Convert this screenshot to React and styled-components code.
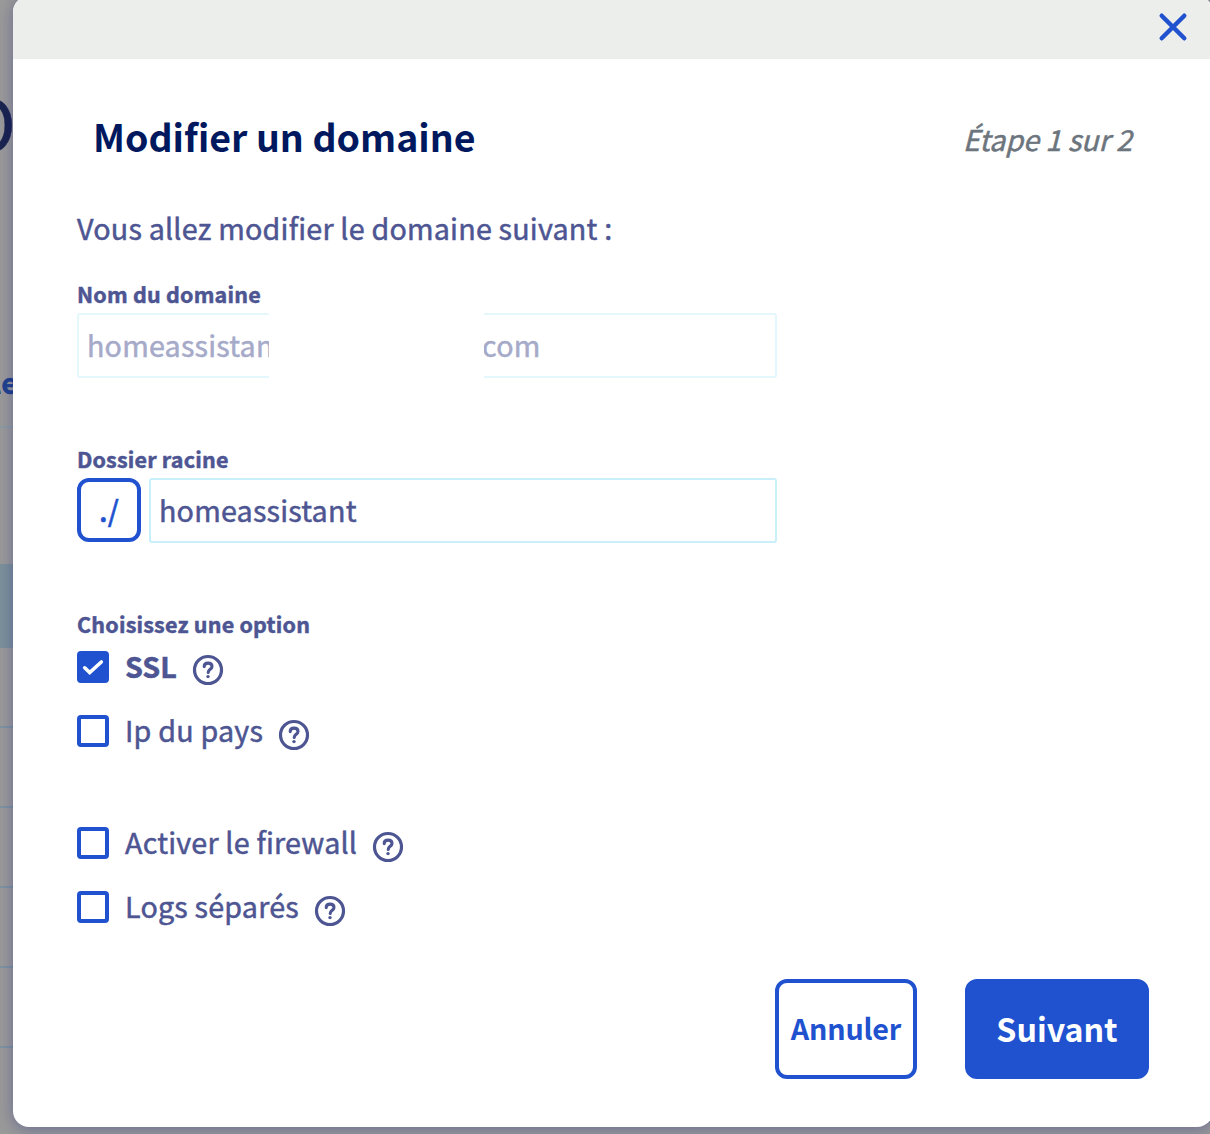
import React, { useState } from "react";
import styled, { createGlobalStyle } from "styled-components";

const GlobalStyle = createGlobalStyle`
  * {
    box-sizing: border-box;
  }
  body {
    margin: 0;
    overflow: hidden;
    background-color: #999999;
    font-family: "Noto Sans CJK SC", "Noto Sans", sans-serif;
    color: #4d5592;
    letter-spacing: 0.2px;
    -webkit-text-stroke: 0.5px currentColor;
  }
`;
const Page = styled.div`
  display: flex;
  align-items: flex-start;
  height: 1134px;
  overflow: hidden;
`;
const Behind = styled.div`
  display: flex;
  flex-direction: column;
  flex: none;
  width: 13px;
  height: 1134px;
  overflow: hidden;
`;
const BehindTitle = styled.div`
  display: flex;
  justify-content: flex-end;
  height: 300px;
  padding: 71px 0 0;
  margin-right: -3px;
  font-size: 72px;
  line-height: 100px;
  color: #1b254f;
`;
const BehindLink = styled.div`
  display: flex;
  justify-content: flex-end;
  height: 128px;
  padding-top: 62px;
  margin-right: -5px;
  border-bottom: 2px solid #8a9ba2;
  font-size: 28.7px;
  font-weight: 700;
  line-height: 40px;
  color: #22428c;
`;
const BehindRow = styled.div`
  flex: none;
  height: ${(props) => props.$height}px;
  background-color: ${(props) => (props.$active ? "#7b9099" : "transparent")};
  border-bottom: ${(props) => (props.$line ? "2px solid #7e93a0" : "none")};
`;
const Modal = styled.div`
  position: relative;
  display: flex;
  flex-direction: column;
  flex: none;
  width: 1200px;
  height: 1131px;
  margin-top: -4px;
  border-radius: 16px;
  background-color: white;
  box-shadow: 0 4px 16px rgba(0, 14, 156, 0.2), 0 0 12px rgba(0, 14, 80, 0.12);
`;
const TopBar = styled.div`
  display: flex;
  justify-content: flex-end;
  height: 63px;
  padding: 15px 24px 0 0;
  border-radius: 16px 16px 0 0;
  background-color: #eceeeb;
`;
const CloseButton = styled.button`
  display: flex;
  width: 32px;
  height: 32px;
  padding: 0;
  border: none;
  background: none;
`;
const Header = styled.div`
  display: flex;
  justify-content: space-between;
  align-items: flex-start;
  height: 60px;
  margin: 47px 81px 0 80px;
`;
const Title = styled.h1`
  margin: 0;
  font-size: 37.5px;
  font-weight: 700;
  line-height: 60px;
  letter-spacing: 0;
  -webkit-text-stroke: 0;
  color: #00185e;
`;
const Step = styled.span`
  padding-top: 3px;
  font-size: 28.7px;
  font-style: italic;
  line-height: 60px;
  letter-spacing: 0;
  color: #6c757d;
`;
const Body = styled.div`
  display: flex;
  flex-direction: column;
  padding: 0 64px;
`;
const Intro = styled.p`
  height: 49px;
  margin: 38px 0 0;
  font-size: 28.7px;
  line-height: 48px;
`;
const Field = styled.div`
  width: 700px;
  height: 101px;
  margin-top: ${(props) => props.$top}px;
`;
const Label = styled.div`
  height: 36px;
  font-size: 21.5px;
  font-weight: 700;
  line-height: 34px;
`;
const InputRow = styled.div`
  display: flex;
  gap: 8px;
`;
const Input = styled.input`
  flex: 1;
  min-width: 0;
  height: 65px;
  padding: 0 8px 2px;
  border: 2px solid #c8f0fa;
  border-radius: 3px;
  background-color: white;
  font-family: inherit;
  font-size: 28.7px;
  letter-spacing: inherit;
  color: #4d5592;
  outline: none;
`;
const MaskedInput = styled.div`
  display: flex;
  justify-content: space-between;
  width: 700px;
`;
const MaskedPart = styled.div`
  width: ${(props) => props.$width}px;
  height: 65px;
  padding-left: ${(props) => (props.$end ? 0 : 8)}px;
  text-indent: ${(props) => (props.$end ? -2 : 0)}px;
  border: 2px solid #e3f7fd;
  border-left-width: ${(props) => (props.$end ? 0 : 2)}px;
  border-right-width: ${(props) => (props.$end ? 2 : 0)}px;
  border-radius: ${(props) => (props.$end ? "0 3px 3px 0" : "3px 0 0 3px")};
  overflow: hidden;
  white-space: nowrap;
  font-size: 28.7px;
  line-height: 59px;
  color: #a6aac9;
`;
const Prefix = styled.div`
  width: 64px;
  height: 64px;
  border: 4px solid #2052d0;
  border-radius: 12px;
  text-align: center;
  font-size: 28.7px;
  font-weight: 500;
  line-height: 55px;
  color: #2052d0;
`;
const Options = styled.div`
  display: flex;
  flex-direction: column;
  margin-top: 64px;
`;
const Option = styled.div`
  display: flex;
  align-items: center;
  height: 32px;
  margin-top: ${(props) => props.$top}px;
  font-size: 28.7px;
  font-weight: ${(props) => (props.$checked ? 700 : 400)};
  line-height: 30px;
  cursor: pointer;
`;
const OptionText = styled.span`
  height: 32px;
  letter-spacing: ${(props) => (props.$checked ? 0 : 0.2)}px;
`;
const Box = styled.span`
  display: flex;
  align-items: center;
  justify-content: center;
  width: 32px;
  height: 32px;
  margin-right: 16px;
  border: 4px solid #2052d0;
  border-radius: 4px;
  background-color: ${(props) => (props.$checked ? "#2052d0" : "white")};
`;
const HelpIcon = styled.svg`
  width: 32px;
  height: 32px;
  margin: ${(props) => (props.$checked ? 6 : 7)}px 0 0 15px;
  fill: none;
  stroke: #4d5592;
`;
const Footer = styled.div`
  display: flex;
  justify-content: flex-end;
  gap: 48px;
  margin-top: 56px;
`;
const Button = styled.button`
  width: ${(props) => (props.$primary ? 184 : 142)}px;
  height: 100px;
  padding: 0 0 ${(props) => (props.$primary ? 2 : 4)}px;
  border: 4px solid #2052d0;
  border-radius: 12px;
  background-color: ${(props) => (props.$primary ? "#2052d0" : "white")};
  font-family: inherit;
  font-size: ${(props) => (props.$primary ? 32.2 : 28.7)}px;
  font-weight: 700;
  letter-spacing: ${(props) => (props.$primary ? 0 : -0.2)}px;
  -webkit-text-stroke: 0;
  color: ${(props) => (props.$primary ? "white" : "#2052d0")};
`;

const Help = ({ checked }) => (
  <HelpIcon viewBox="0 0 32 32" $checked={checked}>
    <circle cx="16" cy="16" r="13.5" strokeWidth="3.2" />
    <path d="M12.2 12.6c0-2.2 1.6-3.5 3.9-3.5s3.9 1.3 3.9 3.3c0 2.8-3.8 2.9-3.8 6" strokeWidth="3.1" strokeLinecap="round" />
    <circle cx="16" cy="22.6" r="1.7" fill="#4d5592" stroke="none" />
  </HelpIcon>
);

const options = [
  { id: "ssl", label: "SSL", top: 8 },
  { id: "ip", label: "Ip du pays", top: 32 },
  { id: "firewall", label: "Activer le firewall", top: 80 },
  { id: "logs", label: "Logs séparés", top: 32 },
];

const App = () => {
  const [checked, setChecked] = useState({ ssl: true });
  const [folder, setFolder] = useState("homeassistant");

  const toggle = (id) => {
    setChecked({ ...checked, [id]: !checked[id] });
  };

  return (
    <Page>
      <GlobalStyle />
      <Behind>
        <BehindTitle>O</BehindTitle>
        <BehindLink>le</BehindLink>
        <BehindRow $height={136} />
        <BehindRow $height={84} $active />
        <BehindRow $height={80} $line />
        <BehindRow $height={80} $line />
        <BehindRow $height={80} $line />
        <BehindRow $height={80} $line />
        <BehindRow $height={80} $line />
      </Behind>
      <Modal>
        <TopBar>
          <CloseButton>
            <svg width="32" height="32" viewBox="0 0 32 32">
              <path d="M4.7 4.7l22.6 22.6M27.3 4.7l-22.6 22.6" fill="none" stroke="#2052d0" strokeWidth="4.4" strokeLinecap="round" />
            </svg>
          </CloseButton>
        </TopBar>
        <Header>
          <Title>Modifier un domaine</Title>
          <Step>Étape 1 sur 2</Step>
        </Header>
        <Body>
          <Intro>Vous allez modifier le domaine suivant :</Intro>
          <Field $top={24}>
            <Label>Nom du domaine</Label>
            <MaskedInput>
              <MaskedPart $width={192}>homeassistant</MaskedPart>
              <MaskedPart $width={293} $end>com</MaskedPart>
            </MaskedInput>
          </Field>
          <Field $top={64}>
            <Label>Dossier racine</Label>
            <InputRow>
              <Prefix>./</Prefix>
              <Input value={folder} onChange={(e) => setFolder(e.target.value)} />
            </InputRow>
          </Field>
          <Options>
            <Label>Choisissez une option</Label>
            {options.map((option) => (
              <Option
                key={option.id}
                $top={option.top}
                $checked={checked[option.id]}
                onClick={() => toggle(option.id)}
              >
                <Box $checked={checked[option.id]}>
                  {checked[option.id] && (
                    <svg width="24" height="24" viewBox="0 0 24 24">
                      <path d="M3.7 12.8l5 4.7L20.3 7" fill="none" stroke="white" strokeWidth="3.6" strokeLinecap="round" />
                    </svg>
                  )}
                </Box>
                <OptionText $checked={checked[option.id]}>{option.label}</OptionText>
                <Help checked={checked[option.id]} />
              </Option>
            ))}
          </Options>
          <Footer>
            <Button>Annuler</Button>
            <Button $primary>Suivant</Button>
          </Footer>
        </Body>
      </Modal>
    </Page>
  );
};

export default App;
